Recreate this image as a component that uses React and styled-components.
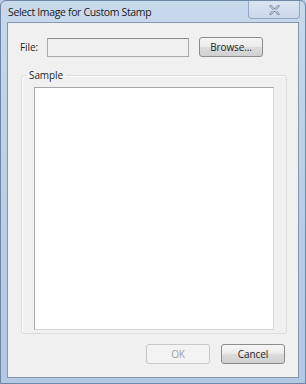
import React from 'react';
import styled, { createGlobalStyle } from 'styled-components';

const Global = createGlobalStyle`
    html, body {
        margin: 0;
        padding: 0;
        background: #b9cde4;
    }
    * { box-sizing: border-box; }
`;

const Frame = styled.div`
    width: 306px;
    height: 384px;
    display: flex;
    flex-direction: column;
    background: linear-gradient(180deg, #c9d9ec 0%, #bcd0e6 40%, #b3c8e1 100%);
    border: 1px solid #6f87a6;
    border-radius: 6px 6px 0 0;
    font-family: "Open Sans", "Noto Sans", sans-serif;
    font-size: 10px;
    letter-spacing: -0.1px;
    color: #1e1e1e;
    overflow: hidden;
`;

const TitleBar = styled.div`
    height: 21px;
    display: flex;
    align-items: center;
    justify-content: space-between;
    padding-left: 7px;
`;

const Title = styled.span`
    font-size: 10.5px;
    color: #1a1a1a;
    letter-spacing: -0.35px;
`;

const CloseButton = styled.div`
    align-self: flex-start;
    width: 52px;
    height: 18px;
    margin-right: 5px;
    border: 1px solid #93a7c0;
    border-top: none;
    border-radius: 0 0 4px 4px;
    background: linear-gradient(180deg, #dbe5f1 0%, #cad8ea 100%);
    display: flex;
    align-items: center;
    justify-content: center;
`;

const Client = styled.div`
    flex: 1;
    margin: 0 6px 5px 6px;
    border: 1px solid #8396b0;
    background: #f0f0f0;
    display: flex;
    flex-direction: column;
    padding: 14px 12px 0 12px;
`;

const FileRow = styled.div`
    display: flex;
    align-items: center;
    height: 20px;
`;

const Label = styled.span`
    width: 27px;
`;

const TextBox = styled.div`
    width: 142px;
    height: 19px;
    border: 1px solid #a9a9a9;
    border-top-color: #8b8b8b;
    background: #f0f0f0;
`;

const Button = styled.div`
    height: 20px;
    width: ${p => p.$w}px;
    margin-left: ${p => p.$ml || 0}px;
    border: 1px solid ${p => (p.$disabled ? '#c9c9c9' : '#8c8c8c')};
    border-radius: 3px;
    background: ${p =>
        p.$disabled ? '#f3f3f3' : 'linear-gradient(180deg, #f6f6f6 0%, #eaeaea 48%, #dcdcdc 52%, #d0d0d0 100%)'};
    color: ${p => (p.$disabled ? '#a0a0a0' : '#1e1e1e')};
    display: flex;
    align-items: center;
    justify-content: center;
`;

const Group = styled.fieldset`
    margin: 11px 1px 0 1px;
    padding: 5px 12px 3px 12px;
    border: 1px solid #dcdcdc;
    border-radius: 3px;
    box-shadow: inset 1px 1px 0 #fbfbfb;
`;

const Legend = styled.legend`
    padding: 0 3px;
    margin-left: -8px;
`;

const Preview = styled.div`
    width: 240px;
    height: 243px;
    background: #fff;
    border: 1px solid #a7a7a7;
    border-right-color: #d6d6d6;
    border-bottom-color: #d6d6d6;
`;

const Footer = styled.div`
    display: flex;
    justify-content: flex-end;
    padding: 10px 1px 0 0;
`;

export default function App() {
    return (
        <>
            <Global />
            <Frame>
                <TitleBar>
                    <Title>Select Image for Custom Stamp</Title>
                    <CloseButton>
                        <svg width="11" height="10" viewBox="0 0 11 10">
                            <path d="M1.5 1 L9.5 9 M9.5 1 L1.5 9" stroke="#6b7d94" strokeWidth="2.2" strokeLinecap="round" />
                            <path d="M1.5 1 L9.5 9 M9.5 1 L1.5 9" stroke="#f4f7fb" strokeWidth="1" strokeLinecap="round" />
                        </svg>
                    </CloseButton>
                </TitleBar>
                <Client>
                    <FileRow>
                        <Label>File:</Label>
                        <TextBox />
                        <Button $w={64} $ml={10}>Browse...</Button>
                    </FileRow>
                    <Group>
                        <Legend>Sample</Legend>
                        <Preview />
                    </Group>
                    <Footer>
                        <Button $w={64} $disabled>OK</Button>
                        <Button $w={64} $ml={11}>Cancel</Button>
                    </Footer>
                </Client>
            </Frame>
        </>
    );
}
